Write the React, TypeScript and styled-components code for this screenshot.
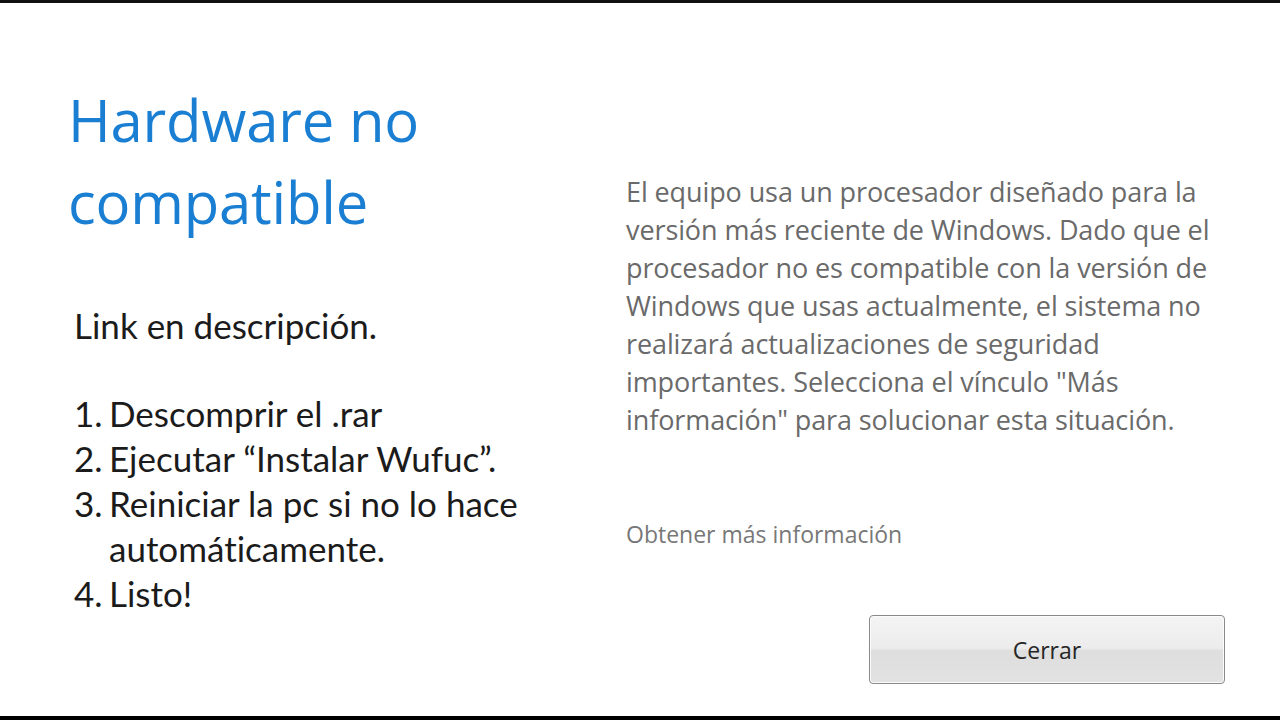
import React from "react";
import styled, {createGlobalStyle} from "styled-components";

const GlobalStyle = createGlobalStyle`
    html, body {
        margin: 0;
        padding: 0;
        background: #000000;
    }
`

const steps = [
    "Descomprir el .rar",
    "Ejecutar \u201cInstalar Wufuc\u201d.",
    "Reiniciar la pc si no lo hace automáticamente.",
    "Listo!",
]

const App: React.FC = function () {
    return (
        <>
            <GlobalStyle/>
            <Frame>
                <LeftColumn>
                    <Title>Hardware no<br/>compatible</Title>
                    <Note>Link en descripción.</Note>
                    <Steps>
                        {steps.map((step, i) => (
                            <Step key={i}>
                                <StepNumber>{i + 1}.</StepNumber>
                                <StepText>{step}</StepText>
                            </Step>
                        ))}
                    </Steps>
                </LeftColumn>
                <RightColumn>
                    <Message>
                        El equipo usa un procesador diseñado para la versión más reciente de Windows.
                        Dado que el procesador no es compatible con la versión de Windows que usas
                        actualmente, el sistema no realizará actualizaciones de seguridad importantes.
                        Selecciona el vínculo "Más información" para solucionar esta situación.
                    </Message>
                    <MoreLink>Obtener más información</MoreLink>
                    <Footer>
                        <CloseButton>Cerrar</CloseButton>
                    </Footer>
                </RightColumn>
            </Frame>
        </>
    )
}

export default App

const Frame = styled.main`
    width: 1280px;
    height: 720px;
    box-sizing: border-box;
    background: #ffffff;
    border-top: 3px solid #111111;
    border-bottom: 4px solid #000000;
    display: grid;
    grid-template-columns: 558px 1fr;
    padding-left: 68px;
    overflow: hidden;
`
const LeftColumn = styled.section`
    display: flex;
    flex-direction: column;
    padding-top: 76px;
`
const Title = styled.h1`
    margin: 0;
    color: #1a7fd2;
    font-family: "Open Sans", "Noto Sans", sans-serif;
    font-size: 58px;
    font-weight: 400;
    line-height: 82px;
    letter-spacing: -0.2px;
`
const Note = styled.p`
    margin: 60px 0 0 6px;
    color: #1b1b1b;
    font-family: Lato, "Open Sans", sans-serif;
    font-size: 35px;
    line-height: 45px;
    font-variant-ligatures: none;
`
const Steps = styled.ol`
    list-style: none;
    margin: 43px 0 0 6px;
    padding: 0;
    width: 460px;
    color: #1b1b1b;
    font-family: Lato, "Open Sans", sans-serif;
    font-size: 35px;
    line-height: 45px;
    font-variant-ligatures: none;
`
const Step = styled.li`
    display: flex;
`
const StepNumber = styled.span`
    flex: none;
    width: 35px;
`
const StepText = styled.span`
    flex: 1;
`
const RightColumn = styled.section`
    display: flex;
    flex-direction: column;
    padding-top: 170px;
    padding-right: 55px;
`
const Message = styled.p`
    margin: 0;
    width: 598px;
    color: #6a6a6a;
    font-family: "Open Sans", "Noto Sans", sans-serif;
    font-size: 27px;
    line-height: 38px;
    letter-spacing: -0.1px;
`
const MoreLink = styled.a`
    margin-top: 80px;
    color: #787878;
    font-family: "Open Sans", "Noto Sans", sans-serif;
    font-size: 23px;
    line-height: 30px;
`
const Footer = styled.div`
    display: flex;
    justify-content: flex-end;
    margin-top: 66px;
`
const CloseButton = styled.button`
    width: 356px;
    height: 69px;
    box-sizing: border-box;
    border: 1.5px solid #8a8a8a;
    border-radius: 4px;
    background: linear-gradient(#f4f4f4 0%, #ececec 48%, #dedede 52%, #e2e2e2 100%);
    box-shadow: inset 0 0 0 1px #fbfbfb;
    color: #262626;
    font-family: "Open Sans", "Noto Sans", sans-serif;
    font-size: 23px;
`
